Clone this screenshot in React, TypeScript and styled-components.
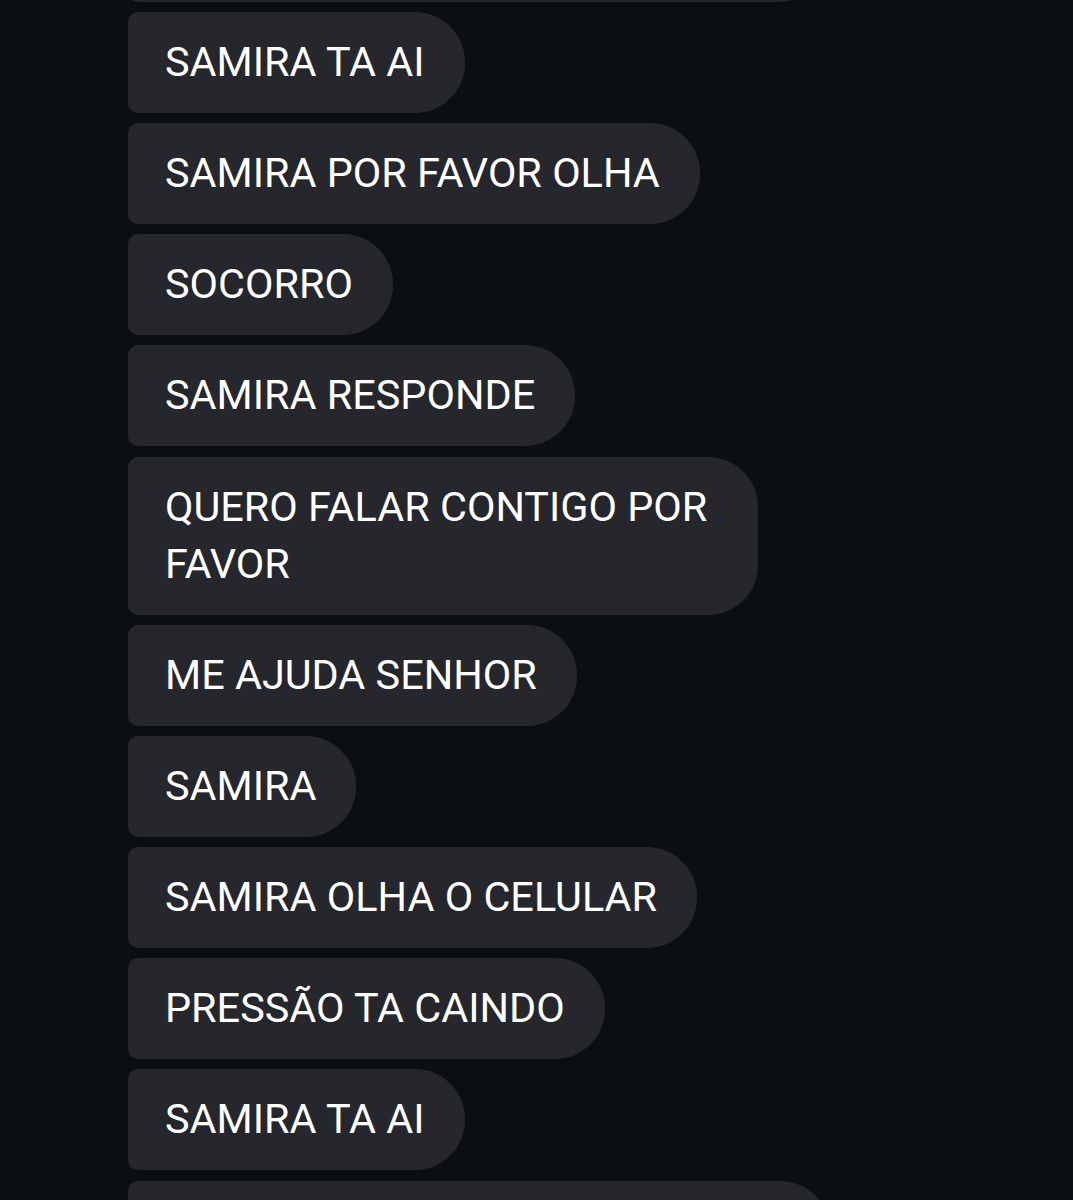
import React from 'react';
import styled, { createGlobalStyle } from 'styled-components';

const GlobalStyle = createGlobalStyle`
  html, body {
    margin: 0;
    padding: 0;
    background: #0b0f13;
    overflow: hidden;
  }
`

const Screen = styled.div`
  width: 1073px;
  height: 1200px;
  overflow: hidden;
  background: #0b0f13;
  font-family: Roboto, "Noto Sans", sans-serif;
`

const Thread = styled.div`
  display: flex;
  flex-direction: column;
  align-items: flex-start;
  gap: 10.2px;
  padding-left: 128px;
  margin-top: -99.4px;
`

const Bubble = styled.div<{ $wide?: number }>`
  box-sizing: border-box;
  max-width: 630px;
  min-width: ${p => (p.$wide ? `${p.$wide}px` : '0')};
  min-height: 101px;
  padding: 22px 40px 22px 37px;
  background: #25272c;
  color: #ffffff;
  font-size: 41.4px;
  line-height: 57px;
  border-radius: 10px 50px 50px 10px;
`

// first and last entries are the bubbles cut off at the top and bottom edges
const messages = [
  { text: '', wide: 700 },
  { text: 'SAMIRA TA AI' },
  { text: 'SAMIRA POR FAVOR OLHA' },
  { text: 'SOCORRO' },
  { text: 'SAMIRA RESPONDE' },
  { text: 'QUERO FALAR CONTIGO POR FAVOR' },
  { text: 'ME AJUDA SENHOR' },
  { text: 'SAMIRA' },
  { text: 'SAMIRA OLHA O CELULAR' },
  { text: 'PRESSÃO TA CAINDO' },
  { text: 'SAMIRA TA AI' },
  { text: '', wide: 702 },
]

const App: React.FC = () => {
  return (
    <Screen>
      <GlobalStyle />
      <Thread>
        {messages.map((m, i) => (
          <Bubble key={i} $wide={m.wide}>
            {m.text}
          </Bubble>
        ))}
      </Thread>
    </Screen>
  );
}

export default App;
